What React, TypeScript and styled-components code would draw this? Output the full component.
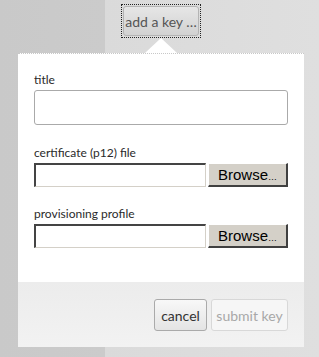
import styled, { createGlobalStyle } from 'styled-components';

// ─── Global ───────────────────────────────────────────────────────────────────

const GlobalStyle = createGlobalStyle`
    html, body {
        margin: 0;
        padding: 0;
        background: #dcdcdc;
    }
    * { box-sizing: border-box; }
`;

// ─── Styled components ────────────────────────────────────────────────────────

const Page = styled.div`
    width: 319px;
    height: 357px;
    padding-left: 18px;
    background:
        linear-gradient(to right, #c9c9c9 0, #cbcbcb 105px, #dadada 105px, #dfdfdf 319px);
    font-family: Lato, 'Noto Sans', sans-serif;
    position: relative;
    overflow: hidden;
`;

const Column = styled.div`
    width: 286px;
    display: flex;
    flex-direction: column;
    align-items: center;
    padding-top: 4px;
`;

const AddKeyButton = styled.button`
    width: 80px;
    height: 34px;
    padding: 1px;
    border: 1px dotted #222;
    background: transparent;
    cursor: pointer;
    display: flex;

    span {
        flex: 1;
        display: flex;
        align-items: center;
        justify-content: center;
        border: 1px solid #b4b4b4;
        border-radius: 3px;
        background: linear-gradient(#e6e6e6, #d2d2d2);
        color: #555;
        font-family: Lato, sans-serif;
        font-size: 14px;
    }
`;

const Caret = styled.div`
    width: 32px;
    height: 15px;
    background: #ffffff;
    clip-path: polygon(50% 0, 100% 100%, 0 100%);
`;

const Panel = styled.div`
    width: 286px;
    background: #ffffff;
    border-top: 1px dotted #c8c8c8;
    display: flex;
    flex-direction: column;
    align-self: stretch;
`;

const Body = styled.div`
    padding: 18px 16px 34px;
    display: flex;
    flex-direction: column;
`;

const Field = styled.div<{ $gap: number }>`
    display: flex;
    flex-direction: column;
    margin-top: ${p => p.$gap}px;
`;

const Label = styled.label`
    font-size: 12px;
    line-height: 16px;
    color: #2a2a2a;
    margin-bottom: 2px;
`;

const TextInput = styled.input`
    width: 254px;
    height: 35px;
    border: 1px solid #aaa;
    border-radius: 3px;
    background: #fff;
    outline: none;
`;

const FileRow = styled.div`
    display: flex;
    align-items: stretch;
    gap: 2px;
    height: 24px;
`;

const FileBox = styled.div`
    width: 172px;
    border-top: 2px solid #444;
    border-left: 2px solid #444;
    border-right: 1px solid #d4d0c8;
    border-bottom: 1px solid #d4d0c8;
    background: #fff;
`;

const BrowseButton = styled.button`
    flex: 1;
    padding: 0;
    background: #d4d0c8;
    border-top: 1px solid #fff;
    border-left: 1px solid #fff;
    border-right: 2px solid #404040;
    border-bottom: 2px solid #404040;
    font-family: 'Liberation Sans', Arial, sans-serif;
    font-size: 15px;
    color: #000;
    cursor: pointer;

    small {
        font-size: 9px;
    }
`;

const Footer = styled.div`
    height: 65px;
    background: linear-gradient(#ececec, #f2f2f2);
    display: flex;
    justify-content: flex-end;
    align-items: center;
    gap: 4px;
    padding: 1px 16px 0;
`;

const FooterButton = styled.button<{ $width: number; $disabled?: boolean }>`
    width: ${p => p.$width}px;
    height: 32px;
    padding: 0;
    border-radius: 3px;
    border: 1px solid ${p => p.$disabled ? '#d8d8d8' : '#aaa'};
    background: ${p => p.$disabled ? '#f6f6f6' : 'linear-gradient(#f8f8f8, #e4e4e4)'};
    color: ${p => p.$disabled ? '#a8a8a8' : '#333'};
    font-family: Lato, sans-serif;
    font-size: 14px;
    cursor: ${p => p.$disabled ? 'default' : 'pointer'};
`;

// ─── Component ────────────────────────────────────────────────────────────────

const App = () => (
    <>
        <GlobalStyle />
        <Page>
            <Column>
                <AddKeyButton><span>add a key …</span></AddKeyButton>
                <Caret />
                <Panel>
                    <Body>
                        <Field $gap={0}>
                            <Label>title</Label>
                            <TextInput />
                        </Field>
                        <Field $gap={20}>
                            <Label>certificate (p12) file</Label>
                            <FileRow>
                                <FileBox />
                                <BrowseButton>Browse<small>…</small></BrowseButton>
                            </FileRow>
                        </Field>
                        <Field $gap={19}>
                            <Label>provisioning profile</Label>
                            <FileRow>
                                <FileBox />
                                <BrowseButton>Browse<small>…</small></BrowseButton>
                            </FileRow>
                        </Field>
                    </Body>
                    <Footer>
                        <FooterButton $width={53}>cancel</FooterButton>
                        <FooterButton $width={77} $disabled>submit key</FooterButton>
                    </Footer>
                </Panel>
            </Column>
        </Page>
    </>
);

export default App;
